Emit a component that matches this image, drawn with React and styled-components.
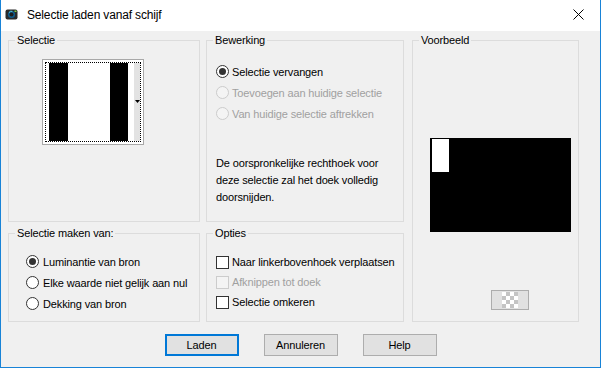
import React from 'react';
import styled, { createGlobalStyle } from 'styled-components';

const GlobalStyle = createGlobalStyle`
    html, body {
        margin: 0;
        padding: 0;
        background: #fff;
    }
    body {
        font-family: "Liberation Sans", Arial, sans-serif;
        font-size: 11px;
        letter-spacing: -0.14px;
        color: #000;
    }
`;

const Window = styled.div`
    width: 601px;
    height: 368px;
    box-sizing: border-box;
    border: 1px solid #1883d7;
    border-top: none;
    display: flex;
    flex-direction: column;
    background: #f0f0f0;
`;

const TitleBar = styled.div`
    height: 31px;
    flex: none;
    background: #fff;
    display: flex;
    align-items: center;
    padding: 0 0 2px 4px;
    box-sizing: border-box;
    font-size: 12px;
    letter-spacing: -0.16px;
`;

const TitleText = styled.span`
    margin-left: 9px;
    flex: 1;
`;

const CloseButton = styled.div`
    width: 46px;
    height: 29px;
    display: flex;
    align-items: center;
    justify-content: center;
    margin-right: -1px;
`;

const Body = styled.div`
    flex: 1;
    padding: 9px 0 0 7px;
`;

const Groups = styled.div`
    display: grid;
    grid-template-columns: 192px 198px 169px;
    grid-template-rows: 182px 89px;
    column-gap: 6px;
    row-gap: 11px;
    grid-template-areas:
        "sel bew voor"
        "maken opt voor";
`;

const Group = styled.div`
    grid-area: ${props => props.$area};
    position: relative;
    border: 1px solid #dcdcdc;
    padding: ${props => props.$pad || '0'};
    margin-left: ${props => props.$shift || '0'};
    display: flex;
    flex-direction: column;
    align-items: flex-start;
`;

const Legend = styled.span`
    position: absolute;
    top: -7px;
    left: 6px;
    padding: 0 2px;
    line-height: 13px;
    background: #f0f0f0;
`;

const Thumb = styled.div`
    width: 102px;
    height: 86px;
    box-sizing: border-box;
    border: 1px solid #a8a8a8;
    background: #fff;
    padding: 2px;
`;

const FocusRect = styled.div`
    height: 100%;
    box-sizing: border-box;
    border: 1px dotted #000;
    svg {
        display: block;
    }
`;

const Row = styled.label`
    display: flex;
    align-items: center;
    height: ${props => props.$h || 20}px;
    gap: ${props => props.$gap || 4}px;
    color: ${props => (props.$disabled ? '#a0a0a0' : '#000')};
    white-space: nowrap;
`;

const RadioCircle = styled.span`
    width: 13px;
    height: 13px;
    box-sizing: border-box;
    border-radius: 50%;
    border: 1px solid ${props => (props.$disabled ? '#cccccc' : '#333')};
    background: ${props => (props.$disabled ? '#f4f4f4' : '#fff')};
    display: flex;
    align-items: center;
    justify-content: center;
    &::after {
        content: '';
        width: 7px;
        height: 7px;
        border-radius: 50%;
        background: #333;
        display: ${props => (props.$checked ? 'block' : 'none')};
    }
`;

const CheckBox = styled.span`
    width: 13px;
    height: 13px;
    box-sizing: border-box;
    border: 1px solid ${props => (props.$disabled ? '#cccccc' : '#333')};
    background: ${props => (props.$disabled ? '#f4f4f4' : '#fff')};
`;

const Note = styled.p`
    margin: 31px 0 0;
    line-height: 17px;
`;

const PreviewCanvas = styled.div`
    width: 141px;
    height: 94px;
    background: #000;
    padding: 1px 0 0 2px;
    box-sizing: border-box;
`;

const PreviewSelection = styled.div`
    width: 17px;
    height: 33px;
    background: #fff;
`;

const AlphaButton = styled.div`
    width: 38px;
    height: 20px;
    box-sizing: border-box;
    margin: 58px 0 0 61px;
    border: 1px solid #adadad;
    background: #e1e1e1;
    display: flex;
    align-items: center;
    justify-content: center;
`;

const Checker = styled.div`
    width: 16px;
    height: 16px;
    background-color: #fff;
    background-image: conic-gradient(#c4c4c4 25%, transparent 0 50%, #c4c4c4 0 75%, transparent 0);
    background-size: 8px 8px;
`;

const ButtonRow = styled.div`
    display: flex;
    justify-content: center;
    gap: 25px;
    margin: 12px 0 0 -7px;
`;

const Button = styled.button`
    width: 74px;
    height: 22px;
    box-sizing: border-box;
    padding: 0;
    font: inherit;
    letter-spacing: inherit;
    color: #000;
    background: #e1e1e1;
    border: ${props => (props.$default ? '2px solid #0078d7' : '1px solid #adadad')};
`;

const AppIcon = () => (
    <svg width="13" height="13" viewBox="0 0 13 13">
        <rect x="0.5" y="1.5" width="12" height="10" rx="2" fill="#2b2b2b" />
        <circle cx="6.5" cy="6.5" r="3.6" fill="#0f5c8c" />
        <circle cx="6.5" cy="6.5" r="2" fill="#1d1d1d" />
        <path d="M4 4.6 A3 3 0 0 1 7.4 3.3" stroke="#5fd3e6" strokeWidth="1" fill="none" />
        <rect x="9.5" y="2.5" width="2" height="1.5" fill="#7fcf4a" />
    </svg>
);

const CloseIcon = () => (
    <svg width="11" height="11" viewBox="0 0 11 11">
        <path d="M0.5 0.5 L10.5 10.5 M10.5 0.5 L0.5 10.5" stroke="#000" strokeWidth="1" />
    </svg>
);

const SelectionThumb = () => (
    <svg width="94" height="78" viewBox="0 0 94 78">
        <rect x="3" y="0" width="19" height="78" fill="#000" />
        <rect x="64" y="0" width="18" height="78" fill="#000" />
        <rect x="88" y="0" width="6" height="78" fill="#e3e3e3" />
        <path d="M89 37 L94 37 L91.5 40 Z" fill="#000" />
    </svg>
);

const Radio = ({ label, checked, disabled, gap }) => (
    <Row $h={21} $gap={gap} $disabled={disabled}>
        <RadioCircle $checked={checked} $disabled={disabled} />
        {label}
    </Row>
);

const Check = ({ label, disabled }) => (
    <Row $gap={3} $disabled={disabled}>
        <CheckBox $disabled={disabled} />
        {label}
    </Row>
);

export default function App() {
    return (
        <>
            <GlobalStyle />
            <Window>
                <TitleBar>
                    <AppIcon />
                    <TitleText>Selectie laden vanaf schijf</TitleText>
                    <CloseButton>
                        <CloseIcon />
                    </CloseButton>
                </TitleBar>
                <Body>
                    <Groups>
                        <Group $area="sel" $pad="18px 0 0 33px">
                            <Legend>Selectie</Legend>
                            <Thumb>
                                <FocusRect>
                                    <SelectionThumb />
                                </FocusRect>
                            </Thumb>
                        </Group>
                        <Group $area="bew" $pad="20px 0 0 9px">
                            <Legend>Bewerking</Legend>
                            <Radio label="Selectie vervangen" checked gap={3} />
                            <Radio label="Toevoegen aan huidige selectie" disabled gap={3} />
                            <Radio label="Van huidige selectie aftrekken" disabled gap={3} />
                            <Note>
                                De oorspronkelijke rechthoek voor
                                <br />
                                deze selectie zal het doek volledig
                                <br />
                                doorsnijden.
                            </Note>
                        </Group>
                        <Group $area="voor" $pad="97px 0 0 17px" $shift="2px">
                            <Legend>Voorbeeld</Legend>
                            <PreviewCanvas>
                                <PreviewSelection />
                            </PreviewCanvas>
                            <AlphaButton>
                                <Checker />
                            </AlphaButton>
                        </Group>
                        <Group $area="maken" $pad="17px 0 0 17px">
                            <Legend>Selectie maken van:</Legend>
                            <Radio label="Luminantie van bron" checked />
                            <Radio label="Elke waarde niet gelijk aan nul" />
                            <Radio label="Dekking van bron" />
                        </Group>
                        <Group $area="opt" $pad="18px 0 0 9px">
                            <Legend>Opties</Legend>
                            <Check label="Naar linkerbovenhoek verplaatsen" />
                            <Check label="Afknippen tot doek" disabled />
                            <Check label="Selectie omkeren" />
                        </Group>
                    </Groups>
                    <ButtonRow>
                        <Button $default>Laden</Button>
                        <Button>Annuleren</Button>
                        <Button>Help</Button>
                    </ButtonRow>
                </Body>
            </Window>
        </>
    );
}
